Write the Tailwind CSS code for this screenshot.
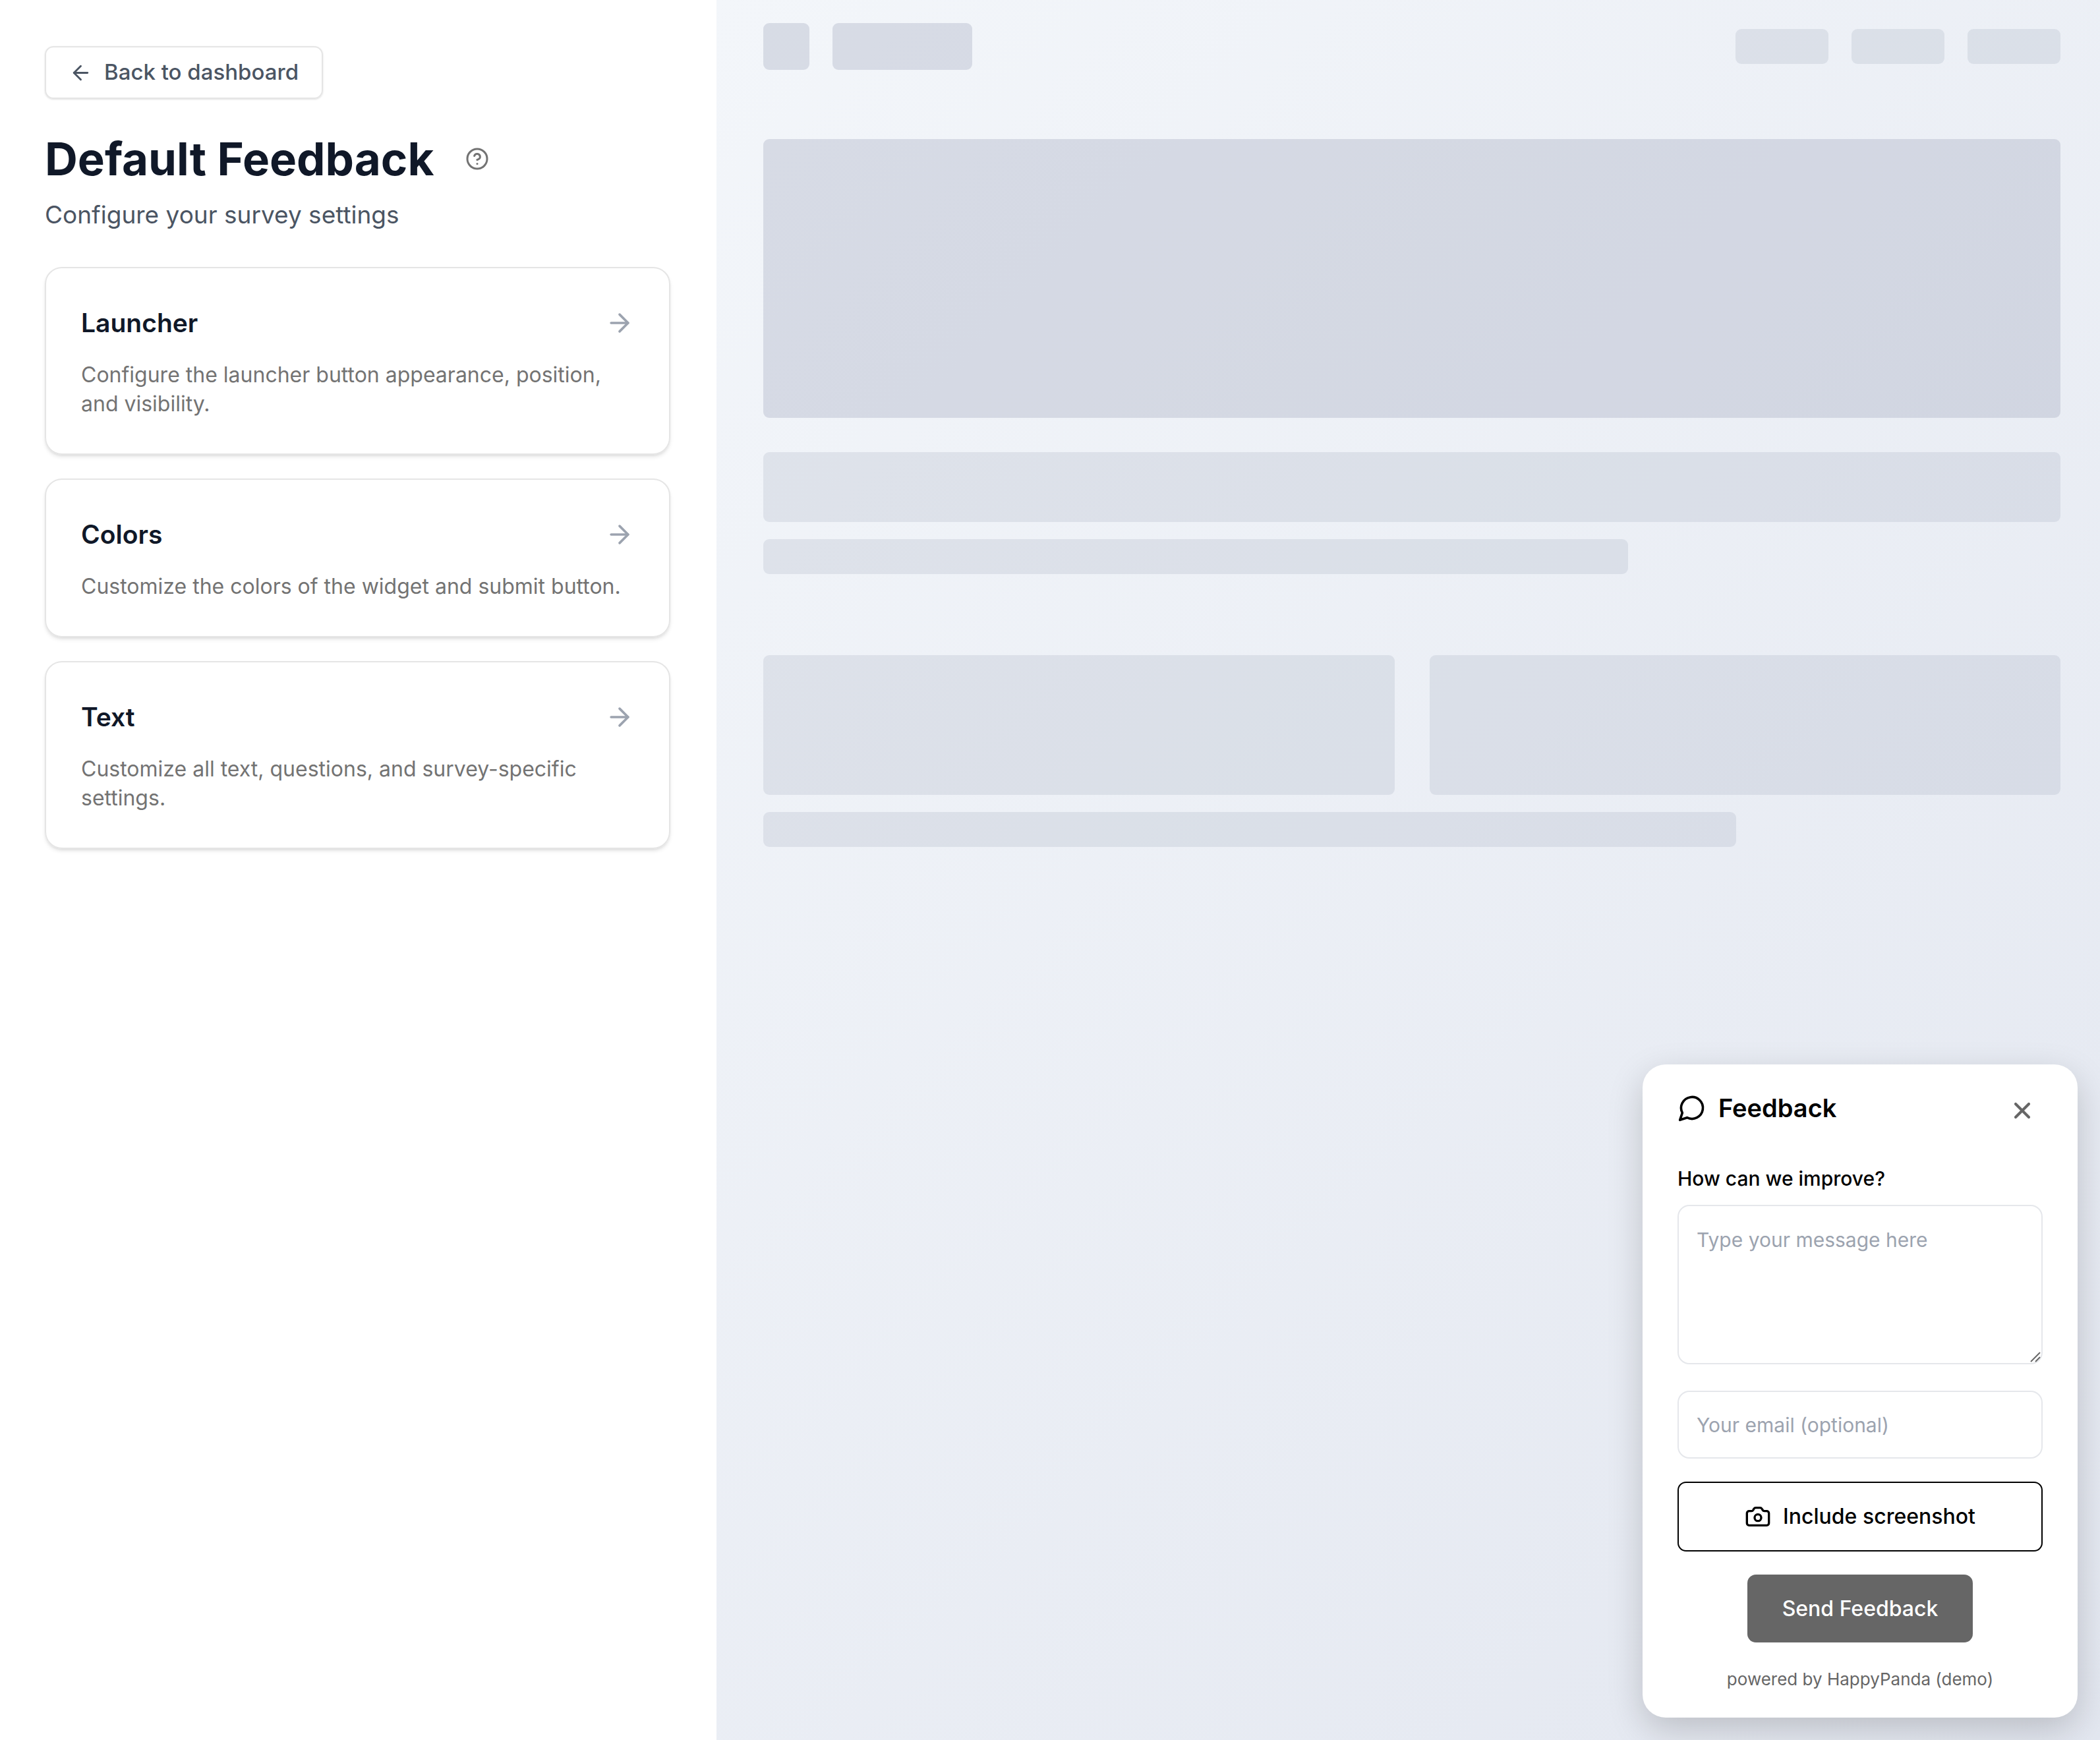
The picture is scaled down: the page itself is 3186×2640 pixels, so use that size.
<!DOCTYPE html>
<html lang="en">
<head>
    <meta charset="UTF-8">
    <meta name="viewport" content="width=device-width, initial-scale=1.0">
    <title>Default Feedback</title>
    <script src="https://cdn.jsdelivr.net/npm/@tailwindcss/browser@4"></script>
</head>
<body class="flex min-h-screen bg-white font-['Inter',sans-serif]">

    <!-- Settings column -->
    <aside class="w-[1087px] shrink-0 py-[70px] pr-[70px] pl-[68px]">
        <a href="#" class="inline-flex h-20 items-center gap-[18px] rounded-[13px] border-2 border-neutral-200 px-[35px] text-[33px] font-medium text-[#4b5563] shadow-sm">
            <svg class="size-[35px]" viewBox="0 0 24 24" fill="none" stroke="currentColor" stroke-width="2" stroke-linecap="round" stroke-linejoin="round">
                <path d="m12 19-7-7 7-7" />
                <path d="M19 12H5" />
            </svg>
            Back to dashboard
        </a>

        <div class="mt-[51px] flex items-center gap-12">
            <h1 class="text-[69px] leading-[80px] font-bold text-gray-900">Default Feedback</h1>
            <button type="button" aria-label="Help" class="text-neutral-500">
                <svg class="size-9" viewBox="0 0 24 24" fill="none" stroke="currentColor" stroke-width="2" stroke-linecap="round" stroke-linejoin="round">
                    <circle cx="12" cy="12" r="10" />
                    <path d="M9.09 9a3 3 0 0 1 5.83 1c0 2-3 3-3 3" />
                    <path d="M12 17h.01" />
                </svg>
            </button>
        </div>
        <p class="mt-[18px] text-[37px] leading-[53px] text-[#4b5563]">Configure your survey settings</p>

        <nav class="mt-[53px] flex flex-col gap-9">
            <a href="#" class="rounded-[26px] border-2 border-neutral-200 p-[53px] shadow-md">
                <div class="flex items-center justify-between">
                    <h2 class="text-[39px] leading-[60px] font-semibold text-gray-900">Launcher</h2>
                    <svg class="size-11 text-[#9ca3af]" viewBox="0 0 24 24" fill="none" stroke="currentColor" stroke-width="2" stroke-linecap="round" stroke-linejoin="round">
                        <path d="M5 12h14" />
                        <path d="m12 5 7 7-7 7" />
                    </svg>
                </div>
                <p class="mt-[27px] text-[32px] leading-[44px] text-neutral-500">Configure the launcher button appearance, position, and visibility.</p>
            </a>
            <a href="#" class="rounded-[26px] border-2 border-neutral-200 p-[53px] shadow-md">
                <div class="flex items-center justify-between">
                    <h2 class="text-[39px] leading-[60px] font-semibold text-gray-900">Colors</h2>
                    <svg class="size-11 text-[#9ca3af]" viewBox="0 0 24 24" fill="none" stroke="currentColor" stroke-width="2" stroke-linecap="round" stroke-linejoin="round">
                        <path d="M5 12h14" />
                        <path d="m12 5 7 7-7 7" />
                    </svg>
                </div>
                <p class="mt-[27px] text-[32px] leading-[44px] text-neutral-500">Customize the colors of the widget and submit button.</p>
            </a>
            <a href="#" class="rounded-[26px] border-2 border-neutral-200 p-[53px] shadow-md">
                <div class="flex items-center justify-between">
                    <h2 class="text-[39px] leading-[60px] font-semibold text-gray-900">Text</h2>
                    <svg class="size-11 text-[#9ca3af]" viewBox="0 0 24 24" fill="none" stroke="currentColor" stroke-width="2" stroke-linecap="round" stroke-linejoin="round">
                        <path d="M5 12h14" />
                        <path d="m12 5 7 7-7 7" />
                    </svg>
                </div>
                <p class="mt-[27px] text-[32px] leading-[44px] text-neutral-500">Customize all text, questions, and survey-specific settings.</p>
            </a>
        </nav>
    </aside>

    <!-- Live preview -->
    <main class="relative flex-1 overflow-hidden bg-linear-135 from-[#f3f6fa] to-[#e3e7f0] pt-[35px] pr-[60px] pl-[71px]">

        <!-- Skeleton page behind the widget -->
        <div class="flex items-center justify-between">
            <div class="flex gap-[35px]">
                <div class="h-[71px] w-[70px] rounded-[9px] bg-[#989fb5]/30"></div>
                <div class="h-[71px] w-[212px] rounded-[9px] bg-[#989fb5]/30"></div>
            </div>
            <div class="flex gap-[35px]">
                <div class="h-[53px] w-[141px] rounded-[9px] bg-[#989fb5]/20"></div>
                <div class="h-[53px] w-[141px] rounded-[9px] bg-[#989fb5]/20"></div>
                <div class="h-[53px] w-[141px] rounded-[9px] bg-[#989fb5]/20"></div>
            </div>
        </div>
        <div class="mt-[105px] h-[423px] rounded-[9px] bg-[#989fb5]/30"></div>
        <div class="mt-[52px] h-[106px] rounded-[9px] bg-[#989fb5]/20"></div>
        <div class="mt-[26px] h-[53px] w-2/3 rounded-[9px] bg-[#989fb5]/20"></div>
        <div class="mt-[123px] grid grid-cols-2 gap-[53px]">
            <div class="h-[212px] rounded-[9px] bg-[#989fb5]/20"></div>
            <div class="h-[212px] rounded-[9px] bg-[#989fb5]/20"></div>
        </div>
        <div class="mt-[26px] h-[53px] w-3/4 rounded-[9px] bg-[#989fb5]/20"></div>

        <!-- Feedback widget -->
        <form class="absolute right-[34px] bottom-[34px] flex w-[660px] flex-col rounded-[35px] bg-white px-[53px] pt-[35px] pb-[38px] text-black shadow-[0_18px_53px_rgba(0,0,0,0.18)]">
            <div class="flex items-start justify-between">
                <h2 class="flex h-[62px] items-center gap-[18px] text-[38px] font-semibold">
                    <svg class="size-11" viewBox="0 0 24 24" fill="none" stroke="currentColor" stroke-width="2" stroke-linecap="round" stroke-linejoin="round">
                        <path d="M7.9 20A9 9 0 1 0 4 16.1L2 22Z" />
                    </svg>
                    Feedback
                </h2>
                <button type="button" aria-label="Close" class="flex h-[70px] w-[62px] items-center justify-center text-[#666666]">
                    <svg class="size-10" viewBox="0 0 24 24" fill="none" stroke="currentColor" stroke-width="2.5" stroke-linecap="round">
                        <path d="M18 6 6 18" />
                        <path d="m6 6 12 12" />
                    </svg>
                </button>
            </div>

            <label for="message" class="mt-[46px] text-[30px] leading-[44px] font-medium">How can we improve?</label>
            <div class="relative mt-[18px] flex">
                <textarea id="message" placeholder="Type your message here" class="h-[242px] flex-1 resize-none rounded-[18px] border-2 border-gray-200 px-[27px] py-[29px] text-[30px] leading-[44px] placeholder:text-[#9ca3af]"></textarea>
                <!-- Resize grip -->
                <svg class="pointer-events-none absolute right-[3px] bottom-[3px] size-4 text-[#666666]" viewBox="0 0 16 16" fill="none" stroke="currentColor" stroke-width="2">
                    <path d="M1 15 15 1" />
                    <path d="m8 15 7-7" />
                </svg>
            </div>

            <input type="email" aria-label="Your email" placeholder="Your email (optional)" class="mt-10 h-[103px] rounded-[18px] border-2 border-gray-200 px-[27px] text-[30px] placeholder:text-[#9ca3af]">

            <button type="button" class="mt-[35px] flex h-[106px] items-center justify-center gap-[18px] rounded-[13px] border-2 border-black text-[32px] font-medium">
                <svg class="size-10" viewBox="0 0 24 24" fill="none" stroke="currentColor" stroke-width="2" stroke-linecap="round" stroke-linejoin="round">
                    <path d="M13.997 4a2 2 0 0 1 1.76 1.05l.486.9A2 2 0 0 0 18.003 7H20a2 2 0 0 1 2 2v9a2 2 0 0 1-2 2H4a2 2 0 0 1-2-2V9a2 2 0 0 1 2-2h1.997a2 2 0 0 0 1.759-1.048l.489-.904A2 2 0 0 1 10.004 4z" />
                    <circle cx="12" cy="13" r="3" />
                </svg>
                Include screenshot
            </button>

            <button type="submit" class="mt-[35px] h-[103px] self-center rounded-[13px] bg-[#666666] px-[53px] text-[32px] font-medium text-white">Send Feedback</button>

            <p class="mt-[36px] text-center text-[26px] leading-10 text-[#666666]">powered by HappyPanda (demo)</p>
        </form>
    </main>

</body>
</html>
